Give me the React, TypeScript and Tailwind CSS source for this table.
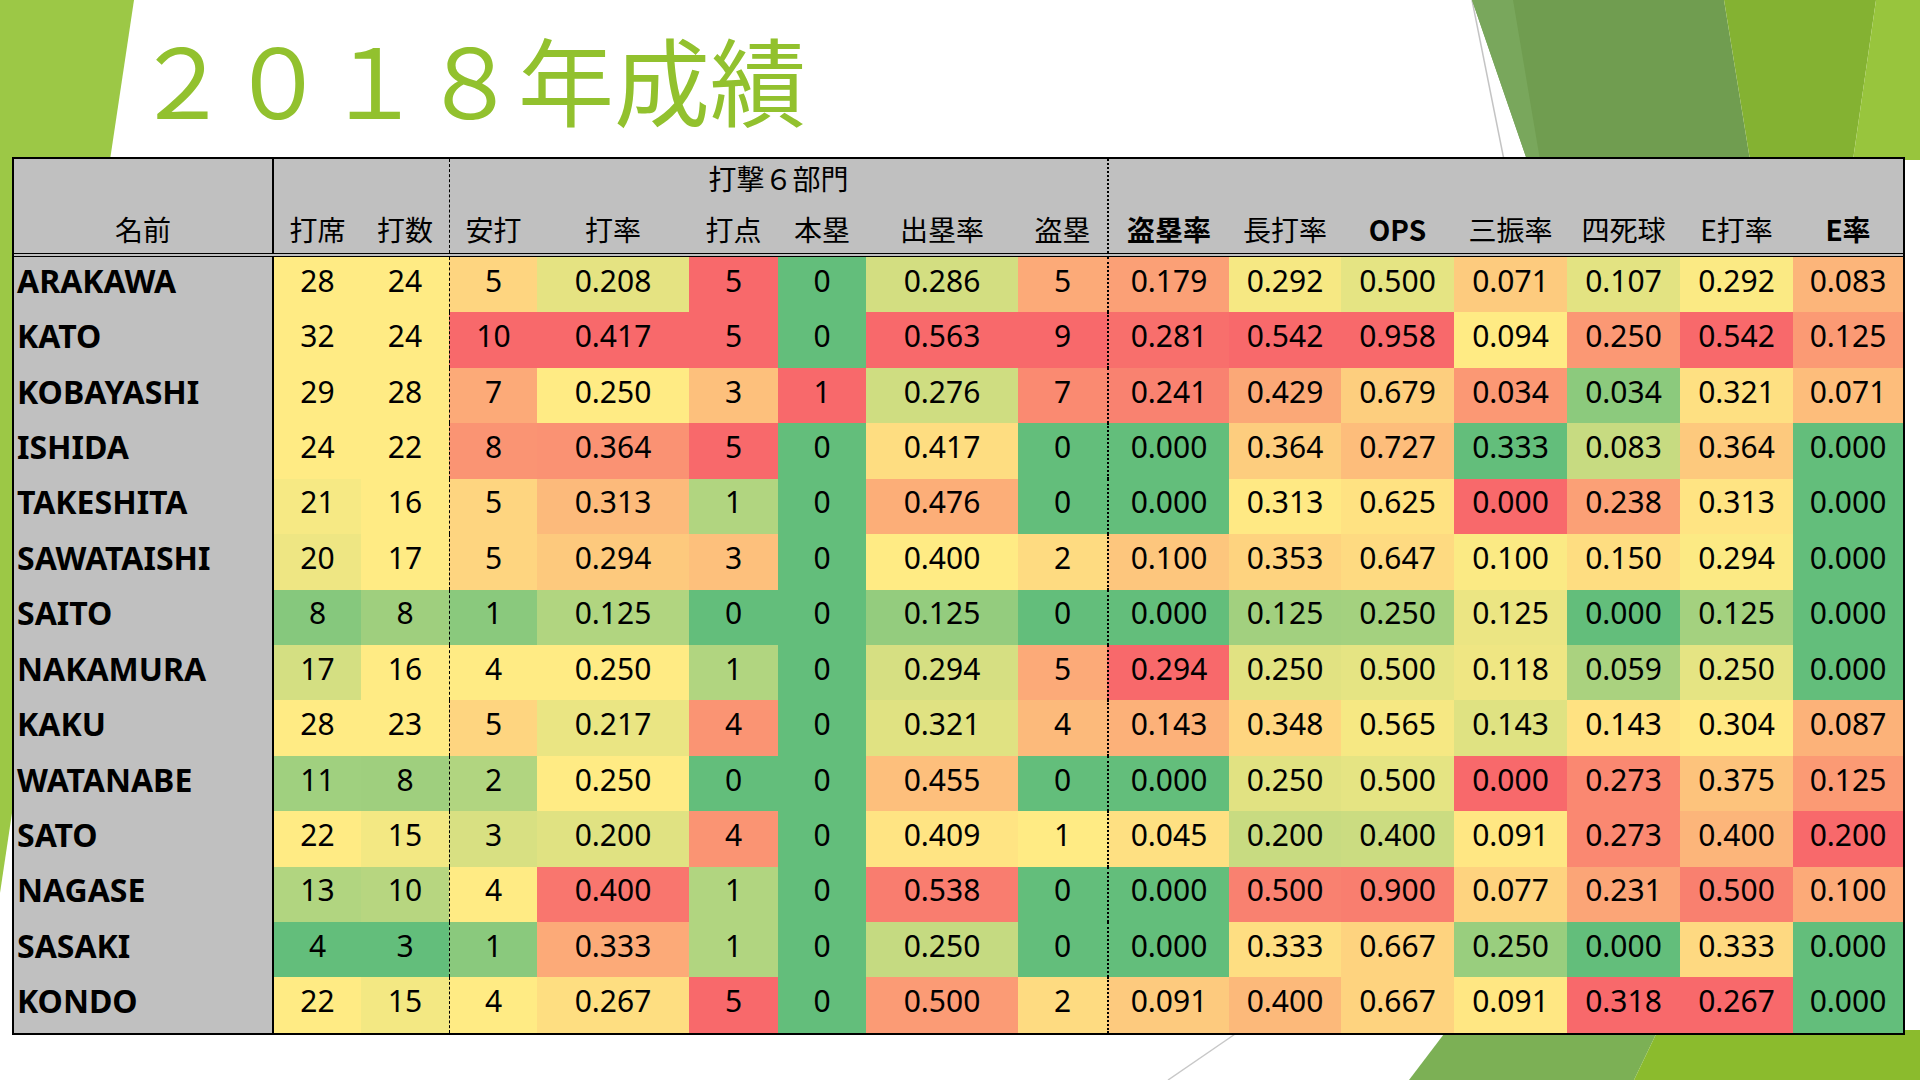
import React from "react";

type Col = { lo: number; mid: number; hi: number; rev?: boolean };

const GREEN = [99, 190, 123];
const YELLOW = [255, 235, 132];
const RED = [248, 105, 107];

// colour-scale settings per stat column (green -> yellow -> red)
const SCALES: Col[] = [
    { lo: 4, mid: 22, hi: 1e9 },
    { lo: 3, mid: 16, hi: 1e9 },
    { lo: 0, mid: 4, hi: 10 },
    { lo: 0, mid: 0.25, hi: 0.417 },
    { lo: 0, mid: 2, hi: 5 },
    { lo: 0, mid: 0.5, hi: 1 },
    { lo: 0, mid: 0.4, hi: 0.563 },
    { lo: 0, mid: 1, hi: 9 },
    { lo: 0, mid: 0.023, hi: 0.294 },
    { lo: 0, mid: 0.31, hi: 0.542 },
    { lo: 0, mid: 0.6, hi: 0.958 },
    { lo: 0.333, mid: 0.094, hi: 0, rev: true },
    { lo: 0, mid: 0.13, hi: 0.318 },
    { lo: 0, mid: 0.3, hi: 0.542 },
    { lo: 0, mid: 0, hi: 0.2 },
];

const WIDTHS = [
    "w-[87px]",
    "w-[88px]",
    "w-[88px] border-l border-dashed border-black",
    "w-[152px]",
    "w-[89px]",
    "w-[88px]",
    "w-[152px]",
    "w-[89px]",
    "w-[122px] border-l-2 border-dotted border-black",
    "w-[112px]",
    "w-[113px]",
    "w-[113px]",
    "w-[113px]",
    "w-[113px]",
    "w-[110px]",
];

const ROWS: [string, string[]][] = [
    ["ARAKAWA", ["28", "24", "5", "0.208", "5", "0", "0.286", "5", "0.179", "0.292", "0.500", "0.071", "0.107", "0.292", "0.083"]],
    ["KATO", ["32", "24", "10", "0.417", "5", "0", "0.563", "9", "0.281", "0.542", "0.958", "0.094", "0.250", "0.542", "0.125"]],
    ["KOBAYASHI", ["29", "28", "7", "0.250", "3", "1", "0.276", "7", "0.241", "0.429", "0.679", "0.034", "0.034", "0.321", "0.071"]],
    ["ISHIDA", ["24", "22", "8", "0.364", "5", "0", "0.417", "0", "0.000", "0.364", "0.727", "0.333", "0.083", "0.364", "0.000"]],
    ["TAKESHITA", ["21", "16", "5", "0.313", "1", "0", "0.476", "0", "0.000", "0.313", "0.625", "0.000", "0.238", "0.313", "0.000"]],
    ["SAWATAISHI", ["20", "17", "5", "0.294", "3", "0", "0.400", "2", "0.100", "0.353", "0.647", "0.100", "0.150", "0.294", "0.000"]],
    ["SAITO", ["8", "8", "1", "0.125", "0", "0", "0.125", "0", "0.000", "0.125", "0.250", "0.125", "0.000", "0.125", "0.000"]],
    ["NAKAMURA", ["17", "16", "4", "0.250", "1", "0", "0.294", "5", "0.294", "0.250", "0.500", "0.118", "0.059", "0.250", "0.000"]],
    ["KAKU", ["28", "23", "5", "0.217", "4", "0", "0.321", "4", "0.143", "0.348", "0.565", "0.143", "0.143", "0.304", "0.087"]],
    ["WATANABE", ["11", "8", "2", "0.250", "0", "0", "0.455", "0", "0.000", "0.250", "0.500", "0.000", "0.273", "0.375", "0.125"]],
    ["SATO", ["22", "15", "3", "0.200", "4", "0", "0.409", "1", "0.045", "0.200", "0.400", "0.091", "0.273", "0.400", "0.200"]],
    ["NAGASE", ["13", "10", "4", "0.400", "1", "0", "0.538", "0", "0.000", "0.500", "0.900", "0.077", "0.231", "0.500", "0.100"]],
    ["SASAKI", ["4", "3", "1", "0.333", "1", "0", "0.250", "0", "0.000", "0.333", "0.667", "0.250", "0.000", "0.333", "0.000"]],
    ["KONDO", ["22", "15", "4", "0.267", "5", "0", "0.500", "2", "0.091", "0.400", "0.667", "0.091", "0.318", "0.267", "0.000"]],
];

function mix(a: number[], b: number[], t: number) {
    const c = a.map((v, i) => Math.round(v + (b[i] - v) * t));
    return `rgb(${c[0]}, ${c[1]}, ${c[2]})`;
}

function cellColor(value: string, col: number, name: string) {
    if (name === "KONDO" && col === 13) return mix(RED, RED, 0);
    const s = SCALES[col];
    let v = parseFloat(value);
    let { lo, mid, hi } = s;
    if (s.rev) {
        v = -v;
        lo = -lo;
        mid = -mid;
        hi = -hi;
    }
    if (v <= lo) return mix(GREEN, GREEN, 0);
    if (v <= mid) return mix(GREEN, YELLOW, (v - lo) / (mid - lo));
    if (v >= hi) return mix(RED, RED, 0);
    return mix(YELLOW, RED, (v - mid) / (hi - mid));
}

function HeadCell({ className, children }: { className: string; children: React.ReactNode }) {
    return (
        <div className={`flex flex-col justify-end ${className}`}>
            <div className="flex h-[52px] items-center justify-center pt-[4px] leading-none">{children}</div>
        </div>
    );
}

function Background() {
    return (
        <svg className="absolute inset-0" width="1920" height="1080" viewBox="0 0 1920 1080">
            {/* left strip */}
            <polygon points="0,0 134,0 0,893" fill="#9cc846" />
            {/* top right facets */}
            <line x1="1472" y1="0" x2="1504" y2="160" stroke="#c4c4c4" strokeWidth="1.5" />
            <polygon points="1472,0 1724,0 1750,160 1527,160" fill="#709d50" />
            <polygon points="1472,0 1513,0 1540,160 1527,160" fill="#79a75c" />
            <polygon points="1724,0 1876,0 1853,160 1750,160" fill="#84b232" />
            <polygon points="1876,0 1920,0 1920,160 1853,160" fill="#98c53d" />
            {/* bottom right facets */}
            <line x1="1241" y1="1030" x2="1168" y2="1080" stroke="#c8c8c8" strokeWidth="1.5" />
            <polygon points="1447,1030 1658,1030 1634,1080 1409,1080" fill="#7cb055" />
            <polygon points="1658,1030 1920,1030 1920,1080 1634,1080" fill="#8bbb2d" />
        </svg>
    );
}

export default function App() {
    const jp = "font-['Noto_Sans_CJK_JP',sans-serif]";
    const num = "font-['Noto_Sans','Noto_Sans_CJK_JP',sans-serif]";

    return (
        <div className="relative h-[1080px] w-[1920px] overflow-hidden bg-white">
            <Background />

            <div className="relative flex flex-col">
                {/* Title */}
                <h1 className={`h-[157px] pl-[134px] pt-[30px] text-[96px] leading-none font-normal text-[#92c12e] ${jp}`}>
                    ２０１８年成績
                </h1>

                {/* Table */}
                <div className={`ml-[12px] w-[1893px] border-2 border-black text-black ${jp}`}>
                    {/* Header */}
                    <div className="flex h-[98px] border-b-[4px] border-double border-black bg-[#c0c0c0] text-[28px]">
                        <HeadCell className="w-[260px] border-r-2 border-black">名前</HeadCell>
                        <HeadCell className="w-[87px]">打席</HeadCell>
                        <HeadCell className="w-[88px]">打数</HeadCell>
                        <div className="flex w-[658px] flex-col border-l border-dashed border-black">
                            <div className="flex h-[42px] items-center justify-center pb-[4px] leading-none">打撃６部門</div>
                            <div className="flex flex-1">
                                <HeadCell className="w-[87px]">安打</HeadCell>
                                <HeadCell className="w-[152px]">打率</HeadCell>
                                <HeadCell className="w-[89px]">打点</HeadCell>
                                <HeadCell className="w-[88px]">本塁</HeadCell>
                                <HeadCell className="w-[152px]">出塁率</HeadCell>
                                <HeadCell className="w-[89px]">盗塁</HeadCell>
                            </div>
                        </div>
                        <HeadCell className="w-[122px] border-l-2 border-dotted border-black font-bold">盗塁率</HeadCell>
                        <HeadCell className="w-[112px]">長打率</HeadCell>
                        <HeadCell className="w-[113px] font-bold">OPS</HeadCell>
                        <HeadCell className="w-[113px]">三振率</HeadCell>
                        <HeadCell className="w-[113px]">四死球</HeadCell>
                        <HeadCell className="w-[113px]">E打率</HeadCell>
                        <HeadCell className="w-[110px] font-bold">E率</HeadCell>
                    </div>

                    {/* Rows */}
                    <div className="flex h-[776px] flex-col">
                        {ROWS.map(([name, values]) => (
                            <div key={name} className="flex flex-1">
                                <div className={`flex w-[260px] items-center border-r-2 border-black bg-[#c0c0c0] pb-[8px] pl-[3px] text-[32px] font-bold leading-none ${num}`}>
                                    {name}
                                </div>
                                {values.map((v, i) => (
                                    <div
                                        key={i}
                                        className={`flex items-center justify-center pb-[8px] text-[30px] leading-none ${num} ${WIDTHS[i]}`}
                                        style={{ backgroundColor: cellColor(v, i, name) }}
                                    >
                                        {v}
                                    </div>
                                ))}
                            </div>
                        ))}
                    </div>
                </div>
            </div>
        </div>
    );
}
